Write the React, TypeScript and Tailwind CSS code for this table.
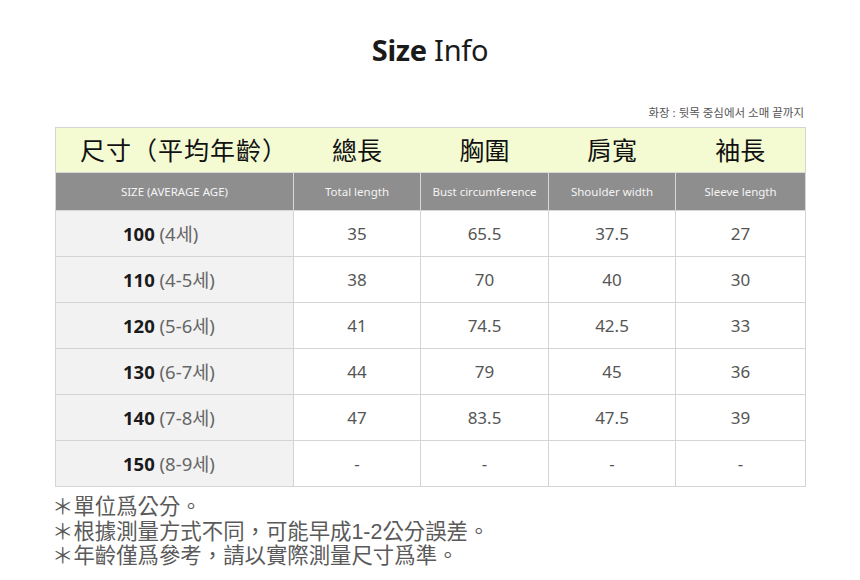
const rows = [
  { size: "100", age: "(4세)", v: ["35", "65.5", "37.5", "27"] },
  { size: "110", age: "(4-5세)", v: ["38", "70", "40", "30"] },
  { size: "120", age: "(5-6세)", v: ["41", "74.5", "42.5", "33"] },
  { size: "130", age: "(6-7세)", v: ["44", "79", "45", "36"] },
  { size: "140", age: "(7-8세)", v: ["47", "83.5", "47.5", "39"] },
  { size: "150", age: "(8-9세)", v: ["-", "-", "-", "-"] },
];

const zh = ["尺寸（平均年齡）", "總長", "胸圍", "肩寬", "袖長"];
const en = ["SIZE (AVERAGE AGE)", "Total length", "Bust circumference", "Shoulder width", "Sleeve length"];

export default function App() {
  return (
    <div
      className="w-[860px] h-[580px] bg-white overflow-hidden"
      style={{ fontFamily: '"Noto Sans", "Noto Sans CJK TC", "Noto Sans CJK KR", sans-serif' }}
    >
      <h1 className="pt-[30px] text-center text-[29px] leading-[40px] text-[#1a1a1a] tracking-[-0.3px]">
        <span className="font-bold">Size</span> <span className="font-normal">Info</span>
      </h1>
      <div className="mt-[35px] mr-[56px] text-right text-[11.5px] leading-[16px] text-[#555]">
        화장 : 뒷목 중심에서 소매 끝까지
      </div>
      <table className="mt-[6px] ml-[55px] w-[750px] table-fixed border-collapse">
        <colgroup>
          <col className="w-[238px]" />
          <col className="w-[127px]" />
          <col className="w-[128px]" />
          <col className="w-[127px]" />
          <col className="w-[130px]" />
        </colgroup>
        <thead>
          <tr className="h-[45px] bg-[#f4fbd3] border border-[#d4d4d4]">
            {zh.map((t, i) => (
              <th
                key={t}
                className={`p-0 text-[25px] font-normal text-[#111] leading-none ${i === 0 ? "pl-[8px] text-left tracking-[1px]" : "text-center"}`}
              >
                {i === 0 ? <span className="pl-[16px]">{t}</span> : t}
              </th>
            ))}
          </tr>
          <tr className="h-[38px] bg-[#8e8e8e]">
            {en.map((t) => (
              <th key={t} className="p-0 border border-[#d8d8d8] text-[11.5px] font-normal text-[#f4f4f4] text-center">
                {t}
              </th>
            ))}
          </tr>
        </thead>
        <tbody>
          {rows.map((r) => (
            <tr key={r.size} className="h-[46px]">
              <td className="p-0 pl-[67px] border border-[#d4d4d4] bg-[#f2f2f2] text-left text-[18.5px]">
                <span className="font-bold text-[#1a1a1a]">{r.size}</span>{" "}
                <span className="text-[#666]">{r.age}</span>
              </td>
              {r.v.map((v, i) => (
                <td key={i} className="p-0 border border-[#d4d4d4] text-center text-[17px] text-[#555]">
                  {v}
                </td>
              ))}
            </tr>
          ))}
        </tbody>
      </table>
      <div
        className="mt-[8px] ml-[52px] text-[21.4px] leading-[24.5px] text-[#5a5a5a]"
        style={{ fontFamily: '"Liberation Sans", "Noto Sans CJK TC", sans-serif' }}
      >
        <p>＊單位爲公分。</p>
        <p>＊根據測量方式不同，可能早成1-2公分誤差。</p>
        <p>＊年齡僅爲參考，請以實際測量尺寸爲準。</p>
      </div>
    </div>
  );
}
